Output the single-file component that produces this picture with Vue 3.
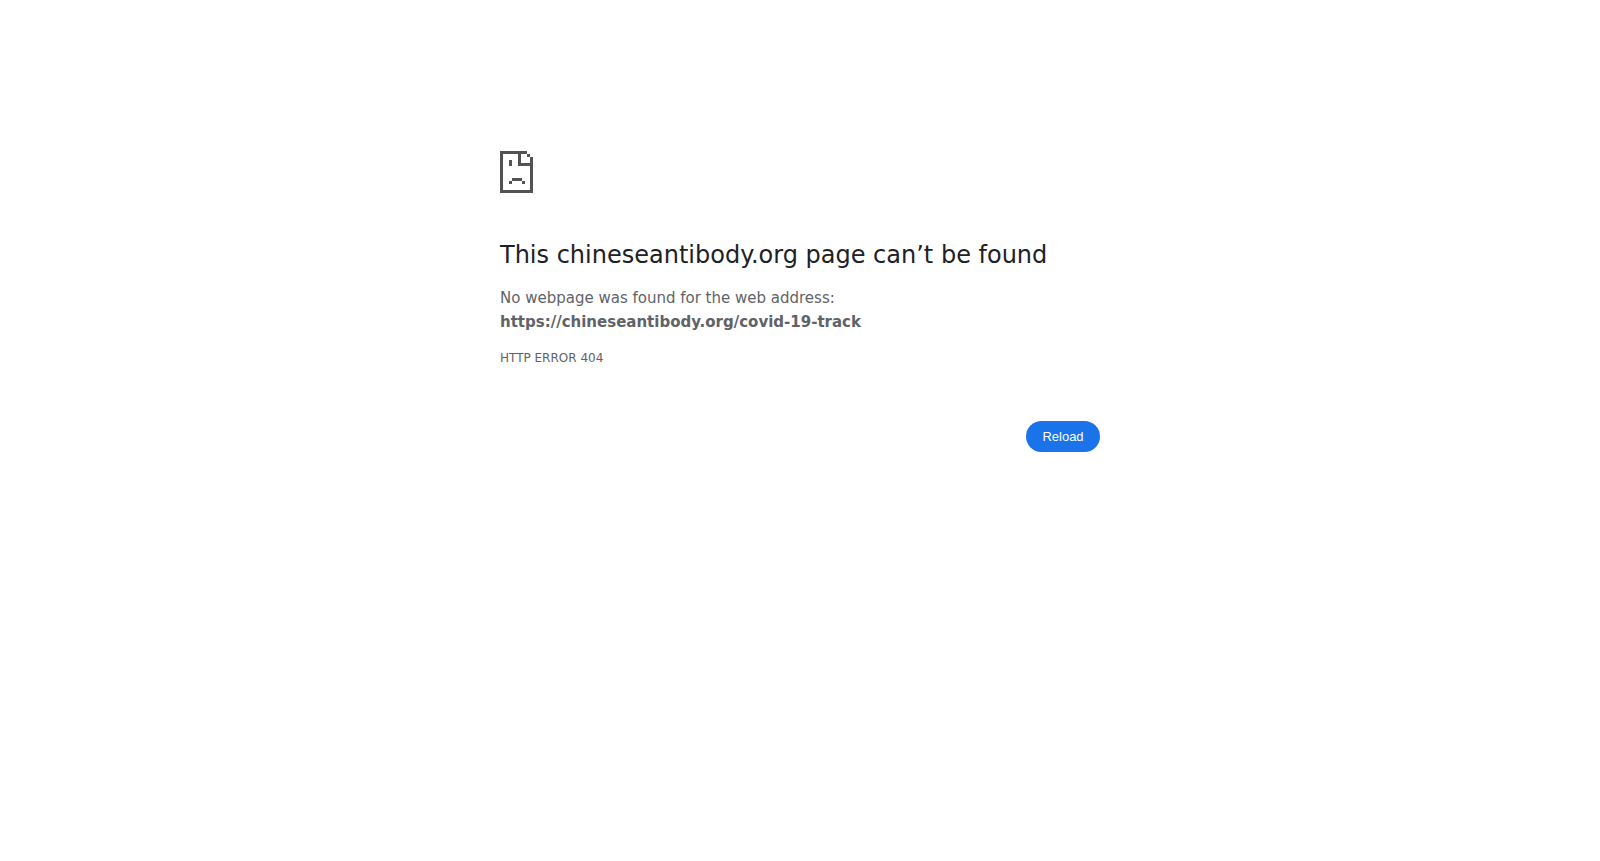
<script setup>
const heading = 'This chineseantibody.org page can’t be found'
const address = 'https://chineseantibody.org/covid-19-track'

function reload() {
  window.location.reload()
}
</script>

<template>
  <main class="error-page">
    <svg class="icon" viewBox="0 0 33 42" shape-rendering="crispEdges" aria-hidden="true">
      <path
        fill="#535353"
        d="M0 0h27v3h-6v9h9V6h3v36H0zM3 3v36h27V15H18V3zM27 3h3v3h-3zM9 9h3v6H9zM12 27h10v3H12zM9 30h3v3H9zM22 30h3v3h-3z"
        fill-rule="evenodd"
      />
    </svg>
    <h1>{{ heading }}</h1>
    <p class="summary">
      No webpage was found for the web address:
      <strong>{{ address }}</strong>
    </p>
    <p class="code">HTTP ERROR 404</p>
    <div class="actions">
      <button type="button" @click="reload">Reload</button>
    </div>
  </main>
</template>

<style>
body {
  margin: 0;
  background: #fff;
}
</style>

<style scoped>
.error-page {
  box-sizing: border-box;
  max-width: 600px;
  margin: 0 auto;
  padding-top: 151px;
  color: #5f6368;
  font-family: "DejaVu Sans", sans-serif;
  font-size: 15px;
  line-height: 24px;
}

.icon {
  display: block;
  width: 33px;
  height: 42px;
}

h1 {
  margin: 47px 0 16px;
  color: #202124;
  font-size: 24px;
  font-weight: 500;
  line-height: 30px;
}

p {
  margin: 0;
}

.summary strong {
  display: block;
  overflow-wrap: anywhere;
}

.code {
  margin-top: 12px;
  font-size: 12px;
}

.actions {
  display: flex;
  justify-content: flex-end;
  margin-top: 51px;
}

button {
  min-width: 74px;
  padding: 8px 16px;
  border: 0;
  border-radius: 20px;
  background: #1a73e8;
  color: #fff;
  font-family: "Liberation Sans", Arial, sans-serif;
  font-size: 13px;
  line-height: 15px;
  cursor: pointer;
}
</style>
